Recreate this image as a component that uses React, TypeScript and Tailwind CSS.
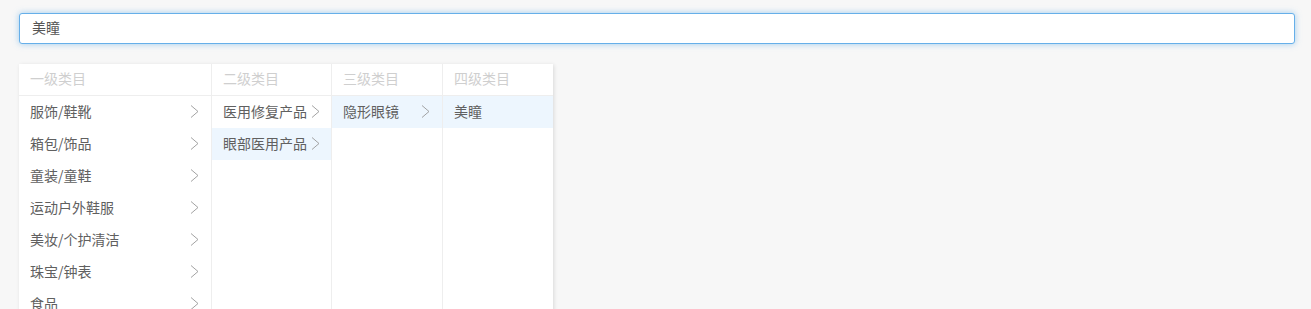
import React from "react";

type Col = { title: string; width: string; items: { label: string; arrow: boolean; active?: boolean }[] };

const cols: Col[] = [
  {
    title: "一级类目",
    width: "w-[193px]",
    items: [
      { label: "服饰/鞋靴", arrow: true },
      { label: "箱包/饰品", arrow: true },
      { label: "童装/童鞋", arrow: true },
      { label: "运动户外鞋服", arrow: true },
      { label: "美妆/个护清洁", arrow: true },
      { label: "珠宝/钟表", arrow: true },
      { label: "食品", arrow: true },
      { label: "医药保健", arrow: true, active: true },
    ],
  },
  {
    title: "二级类目",
    width: "w-[120px]",
    items: [
      { label: "医用修复产品", arrow: true },
      { label: "眼部医用产品", arrow: true, active: true },
    ],
  },
  {
    title: "三级类目",
    width: "w-[111px]",
    items: [{ label: "隐形眼镜", arrow: true, active: true }],
  },
  {
    title: "四级类目",
    width: "w-[110px]",
    items: [{ label: "美瞳", arrow: false, active: true }],
  },
];

export default function App() {
  return (
    <div
      className="h-[309px] w-[1311px] overflow-hidden bg-[#f7f7f7] text-[14px] text-[#606060]"
      style={{ fontFamily: '"Noto Sans CJK SC", "Noto Sans", sans-serif' }}
    >
      <div className="pl-[19px] pr-[16px] pt-[13px]">
        <div className="flex h-[31px] items-center rounded-[3px] border border-[#66afe9] bg-white pb-[3px] pl-[12px] shadow-[0_0_6px_rgba(102,175,233,0.6)]">
          <span className="leading-none text-[#555]">美瞳</span>
        </div>
      </div>
      <div className="ml-[19px] mt-[20px] flex w-fit bg-white shadow-[1px_1px_4px_rgba(0,0,0,0.12)]">
        {cols.map((c, i) => (
          <div
            key={c.title}
            className={`${c.width} ${i < cols.length - 1 ? "border-r border-[#eee]" : ""} flex min-h-[320px] flex-col`}
          >
            <div className="flex h-[32px] items-center border-b border-[#eee] px-[11px] pb-[2px] text-[#cfcfcf]">{c.title}</div>
            {c.items.map((it) => (
              <div
                key={it.label}
                className={`flex h-[32px] items-center justify-between pb-[2px] pl-[11px] pr-[12px] ${it.active && i > 0 ? "bg-[#edf6fe]" : ""}`}
              >
                <span className="whitespace-nowrap">{it.label}</span>
                {it.arrow && (
                  <svg width="9" height="15" viewBox="0 0 9 15" className="ml-[4px] shrink-0">
                    <path d="M1 1.5 L8 7.5 L1 13.5" fill="none" stroke="#999" strokeWidth="0.9" />
                  </svg>
                )}
              </div>
            ))}
          </div>
        ))}
      </div>
    </div>
  );
}
